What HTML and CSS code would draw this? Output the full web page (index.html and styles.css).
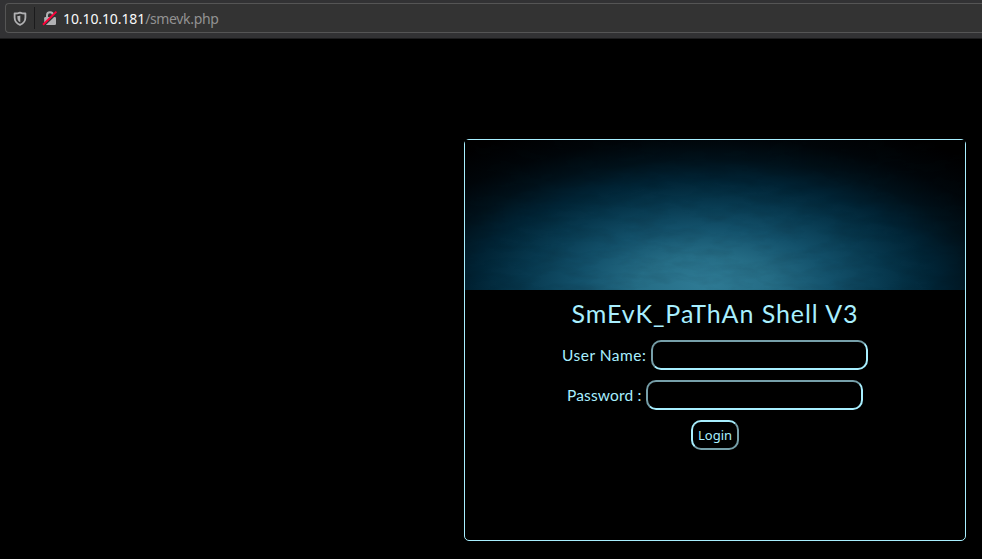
FILE: index.html
```html
<!DOCTYPE html>
<html lang="en">
<head>
<meta charset="utf-8">
<title>SmEvK_PaThAn Shell V3</title>
<link rel="stylesheet" href="styles.css">
</head>
<body>
<header class="toolbar">
  <div class="urlbar">
    <svg class="shield" width="14" height="16" viewBox="0 0 14 16">
      <path d="M7 1.6C5.2 2.3 3.3 2.5 1.6 2.5V6.5C1.6 10 3.2 12.4 7 13.9C10.8 12.4 12.4 10 12.4 6.5V2.5C10.7 2.5 8.8 2.3 7 1.6Z" fill="none" stroke="#b1b1b3" stroke-width="1.8" stroke-linejoin="round"/>
      <path d="M7.3 4.4V11.3C5.1 10.2 4.4 8.7 4.4 6.5V5C5.4 4.9 6.3 4.8 7.3 4.4Z" fill="#b1b1b3"/>
    </svg>
    <span class="divider"></span>
    <svg class="lock" width="16" height="16" viewBox="0 0 16 16">
      <path d="M5 8V5.2a3 3 0 0 1 6 0V8" fill="none" stroke="#b1b1b3" stroke-width="2"/>
      <rect x="2.2" y="7" width="11.8" height="8" rx="1.3" fill="#b1b1b3"/>
      <path d="M1.8 15.6L15.5 2.4" stroke="#333" stroke-width="2"/>
      <path d="M1 14.8L14.4 1.6" stroke="#ff0039" stroke-width="1.9"/>
    </svg>
    <span class="host">10.10.10.181</span><span class="path">/smevk.php</span>
  </div>
</header>
<main class="page">
  <section class="panel">
    <div class="banner">
      <svg class="texture" width="500" height="150">
        <filter id="grain" x="0" y="0" width="100%" height="100%">
          <feTurbulence type="fractalNoise" baseFrequency="0.03 0.09" numOctaves="4" seed="7"/>
          <feColorMatrix values="0 0 0 0 0  0 0 0 0 0  0 0 0 0 0  1.6 0 0 0 -.65"/>
        </filter>
        <rect width="500" height="150" filter="url(#grain)"/>
      </svg>
    </div>
    <h1>SmEvK_PaThAn Shell V3</h1>
    <form>
      <div class="row"><label class="user" for="user">User Name:</label><input id="user" type="text"></div>
      <div class="row"><label class="pass" for="pass">Password :</label><input id="pass" type="password"></div>
      <button type="button">Login</button>
    </form>
  </section>
</main>
</body>
</html>
```
FILE: styles.css
```css
* { box-sizing: border-box; }
body {
  margin: 0;
  height: 559px;
  overflow: hidden;
  background: #000;
  color: #a8efff;
  font-family: Lato, "Liberation Sans", sans-serif;
}
.toolbar {
  height: 39px;
  padding: 3px 0 0 5px;
  background: #323234;
  border-bottom: 1px solid #1c1c1d;
}
.urlbar {
  display: flex;
  align-items: center;
  height: 30px;
  padding-left: 7px;
  background: #333;
  border: 1px solid #555;
  border-right: 0;
  border-radius: 4px 0 0 4px;
  font: 14px/28px "Noto Sans", sans-serif;
}
.shield { margin-top: 1px; }
.divider {
  width: 1px;
  height: 22px;
  margin: 0 7px;
  background: #1b1b1c;
}
.lock { margin-right: 5px; }
.host, .path { padding-top: 1px; }
.host { color: #f9f9fa; letter-spacing: -0.1px; }
.path { color: #929292; letter-spacing: -0.35px; }
.page {
  display: flex;
  justify-content: flex-end;
  padding: 100px 16px 0 0;
}
.panel {
  width: 502px;
  height: 402px;
  border: 1px solid #a8efff;
  border-radius: 5px;
}
.banner {
  height: 150px;
  background: radial-gradient(ellipse 330px 150px at 240px 145px,
    #2f7b95 0%, #256c85 20%, #13516b 38%, #07384e 55%, #002233 71%, #00111a 84%, #00060a 98%, #000 118%);
}
.texture { display: block; opacity: 0.11; }
h1 {
  height: 50px;
  margin: 0;
  text-align: center;
  font-size: 25px;
  font-weight: 400;
  line-height: 47px;
  letter-spacing: 0.95px;
  white-space: nowrap;
}
form {
  display: flex;
  flex-direction: column;
  align-items: center;
  gap: 10px;
}
.row {
  display: flex;
  gap: 5px;
}
label {
  font-size: 15.5px;
  line-height: 30px;
  white-space: nowrap;
}
.user { width: 84px; letter-spacing: 0.5px; }
.pass { width: 74px; letter-spacing: 0.15px; }
input {
  width: 217px;
  height: 30px;
  padding: 2px 6px;
  background: #000;
  color: #a8efff;
  border: 2px solid;
  border-color: #769fa9 #a8efff #a8efff #769fa9;
  border-radius: 10px;
  outline: 0;
}
button {
  width: 48px;
  height: 30px;
  padding: 0;
  background: #000;
  color: #a8efff;
  border: 2px solid;
  border-color: #a8efff #769fa9 #769fa9 #a8efff;
  border-radius: 10px;
  font: 13px "Noto Sans", sans-serif;
}
```
